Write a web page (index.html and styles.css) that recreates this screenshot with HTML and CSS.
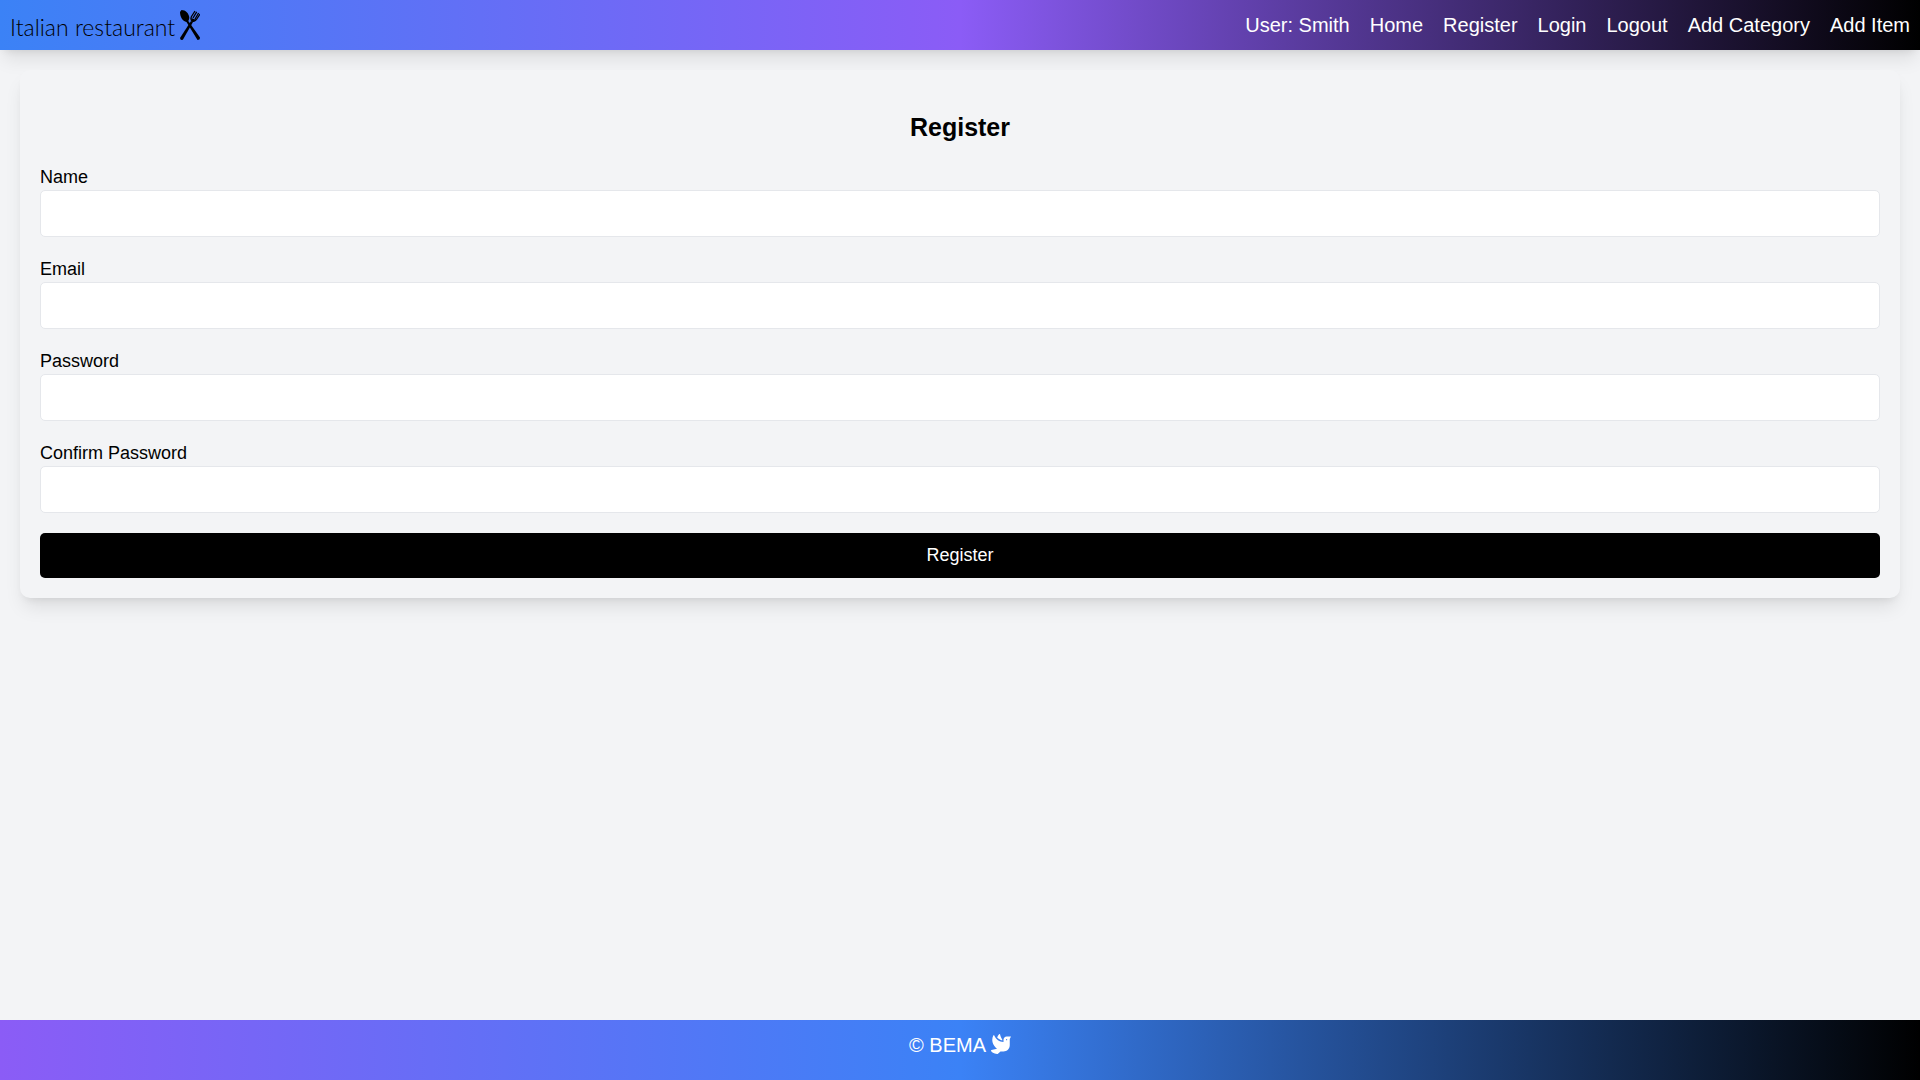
FILE: index.html
```html
<!DOCTYPE html>
<html lang="en">
<head>
<meta charset="utf-8">
<meta name="viewport" content="width=device-width, initial-scale=1">
<title>Register</title>
<link rel="stylesheet" href="styles.css">
</head>
<body>
<header class="header">
  <a class="logo" href="#">
    <span class="logo-text">Italian restaurant</span>
    <svg class="logo-icon" viewBox="0 0 20 30" aria-hidden="true">
      <path d="M1.500 0C5.500 0 9 3.500 9.300 7.500C9.300 9 8.800 10 8.300 11L20 27.500Q20 30 17.500 30L6.500 12C2.500 11.500 0 6.500 0 2Z"/>
      <path d="M13 12L3 29.500Q.5 31 0 28L11 11Z"/>
      <path d="M15 1L11.500 6.500Q10 10 12.500 11.200Q15 12 16.800 9L20 4M16.700 1.800L13 8M18.600 3L14.800 9.500" fill="none" stroke="#000" stroke-width="1.300"/>
      <path d="M11.500 8L16 10Q14 12.500 11.500 11.500Z"/>
    </svg>
  </a>
  <nav class="nav">
    <span>User: Smith</span>
    <a href="#">Home</a>
    <a href="#">Register</a>
    <a href="#">Login</a>
    <a href="#">Logout</a>
    <a href="#">Add Category</a>
    <a href="#">Add Item</a>
  </nav>
</header>
<main class="main">
  <form class="card">
    <h1 class="title">Register</h1>
    <div class="field"><label for="name">Name</label><input id="name" type="text"></div>
    <div class="field"><label for="email">Email</label><input id="email" type="email"></div>
    <div class="field"><label for="password">Password</label><input id="password" type="password"></div>
    <div class="field"><label for="confirm">Confirm Password</label><input id="confirm" type="password"></div>
    <button class="submit" type="submit">Register</button>
  </form>
</main>
<footer class="footer">
  <span>© BEMA</span>
  <svg class="dove" viewBox="0 0 512 512" aria-hidden="true"><path fill="currentColor" d="M288 167.200v-28.100c-28.200-36.300-47.100-79.300-54.100-125.200-2.100-13.500-19-18.800-27.800-8.300-21.100 24.900-37.700 54.100-48.900 86.500 34.200 38.300 80 64.600 130.800 75.100zM400 64c-44.200 0-80 35.900-80 80.100v59.400C215.600 197.300 127 133 87 41.800c-5.500-12.500-23.200-13.200-29-.9C41.400 76 32 115.200 32 156.600c0 70.800 34.100 136.900 85.100 185.900 13.200 12.700 26.100 23.200 38.900 32.800l-143.900 36C1.400 414-3.400 426.400 2.600 435.700 20 462.600 63 508.200 155.800 512c8 .3 16-2.600 22.100-7.900l65.200-56.100H320c88.400 0 160-71.500 160-159.900V128l32-64H400zm0 96.100c-8.800 0-16-7.200-16-16s7.200-16 16-16 16 7.200 16 16-7.200 16-16 16z"/></svg>
</footer>
</body>
</html>
```
FILE: styles.css
```css
* {
  box-sizing: border-box;
}

body {
  display: flex;
  flex-direction: column;
  min-height: 100vh;
  margin: 0;
  background: #f3f4f6;
  color: #000;
  font: 20px/30px "Liberation Sans", Arial, sans-serif;
}

a {
  color: inherit;
  text-decoration: none;
}

.header {
  display: flex;
  flex-wrap: wrap;
  align-items: center;
  justify-content: space-between;
  padding: 10px;
  background: linear-gradient(to right, #3b82f6, #8b5cf6, #000);
  box-shadow: 0 12px 19px -4px rgba(0, 0, 0, 0.1), 0 5px 8px -5px rgba(0, 0, 0, 0.1);
}

.logo {
  display: flex;
  align-items: flex-end;
  gap: 5px;
  font-family: Lato, sans-serif;
  font-size: 23px;
  font-weight: 300;
}

.logo-text {
  line-height: 26px;
}

.logo-icon {
  width: 20px;
  height: 30px;
}

.nav {
  display: flex;
  flex-wrap: wrap;
  gap: 0 20px;
  color: #fff;
}

.main {
  flex: 1;
  padding: 20px;
}

.card {
  padding: 40px 20px 20px;
  border-radius: 10px;
  background: #f3f4f6;
  box-shadow: 0 12px 19px -4px rgba(0, 0, 0, 0.1), 0 5px 8px -5px rgba(0, 0, 0, 0.1);
  font-size: 18px;
  line-height: 25px;
}

.title {
  margin: 0 0 20px;
  font-size: 25px;
  line-height: 35px;
  text-align: center;
}

.field {
  margin-bottom: 20px;
}

.field label {
  display: block;
}

.field input {
  display: block;
  width: 100%;
  height: 47px;
  padding: 10px;
  border: 1px solid #e5e7eb;
  border-radius: 5px;
  background: #fff;
  font: inherit;
}

.submit {
  display: block;
  width: 100%;
  padding: 10px;
  border: 0;
  border-radius: 5px;
  background: #000;
  color: #fff;
  font: inherit;
}

.footer {
  display: flex;
  justify-content: center;
  gap: 5px;
  padding: 10px 10px 20px;
  background: linear-gradient(to right, #8b5cf6, #3b82f6, #000);
  color: #fff;
}

.dove {
  width: 20px;
  height: 20px;
  margin-top: 4px;
}
```
